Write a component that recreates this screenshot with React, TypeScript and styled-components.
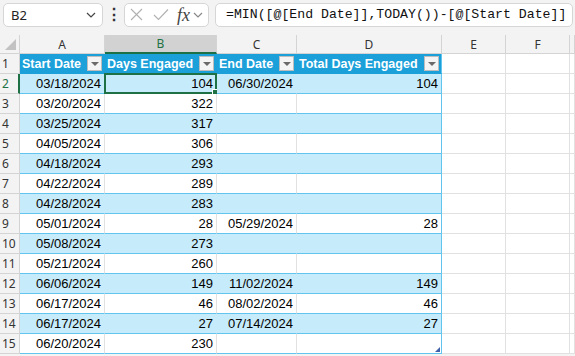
import React from 'react'
import styled, { createGlobalStyle } from 'styled-components'

const colors = {
  chrome: '#f3f3f3',
  gridLine: '#e1e1e1',
  headerLine: '#d4d4d4',
  tableHead: '#1ba0da',
  band: '#c6ebfa',
  tableLine: '#62c5f0',
  green: '#1e7145',
  text: '#000',
  muted: '#444',
}

type Row = { n: number; start: string; days: string; end?: string; total?: string }

const rows: Row[] = [
  { n: 2, start: '03/18/2024', days: '104', end: '06/30/2024', total: '104' },
  { n: 3, start: '03/20/2024', days: '322' },
  { n: 4, start: '03/25/2024', days: '317' },
  { n: 5, start: '04/05/2024', days: '306' },
  { n: 6, start: '04/18/2024', days: '293' },
  { n: 7, start: '04/22/2024', days: '289' },
  { n: 8, start: '04/28/2024', days: '283' },
  { n: 9, start: '05/01/2024', days: '28', end: '05/29/2024', total: '28' },
  { n: 10, start: '05/08/2024', days: '273' },
  { n: 11, start: '05/21/2024', days: '260' },
  { n: 12, start: '06/06/2024', days: '149', end: '11/02/2024', total: '149' },
  { n: 13, start: '06/17/2024', days: '46', end: '08/02/2024', total: '46' },
  { n: 14, start: '06/17/2024', days: '27', end: '07/14/2024', total: '27' },
  { n: 15, start: '06/20/2024', days: '230' },
]

const GlobalStyle = createGlobalStyle`
  html, body { margin: 0; padding: 0; background: ${colors.chrome}; }
  body { font-family: "Liberation Sans", Arial, sans-serif; }
`

const Page = styled.div`
  width: 575px;
  height: 356px;
  overflow: hidden;
  background: ${colors.chrome};
`

const FormulaBar = styled.div`
  display: flex;
  align-items: center;
  height: 35px;
  padding: 0 0 6px 3px;
  box-sizing: border-box;
`

const Field = styled.div`
  display: flex;
  align-items: center;
  height: 24px;
  box-sizing: border-box;
  background: #fff;
  border: 1px solid #d6d6d6;
  border-radius: 5px;
`

const NameBox = styled(Field)`
  width: 100px;
  padding: 0 6px 0 7px;
  justify-content: space-between;
  font-family: "Noto Sans", "Open Sans", sans-serif;
  font-size: 13px;
  color: #222;
`

const Dots = styled.div`
  width: 21px;
  text-align: center;
  font-size: 16px;
  font-weight: bold;
  color: #333;
  line-height: 1;
`

const FnBox = styled(Field)`
  width: 85px;
  padding: 0 0 0 5px;
`

const IconSlot = styled.span<{ $gap: number }>`
  display: flex;
  align-items: center;
  margin-right: ${(p) => p.$gap}px;
`

const Fx = styled.span`
  font-family: "Liberation Serif", "DejaVu Serif", serif;
  font-style: italic;
  font-size: 18px;
  color: #444;
  margin-right: 3px;
  line-height: 1;
`

const FormulaInput = styled(Field)`
  margin-left: 6px;
  flex: 1;
  margin-right: 2px;
  padding-left: 10px;
  font-family: "Liberation Mono", "DejaVu Sans Mono", monospace;
  font-size: 13.2px;
  color: #111;
  white-space: nowrap;
  overflow: hidden;
`

const Grid = styled.div`
  display: grid;
  grid-template-columns: 20px 85px 112px 80px 145px 64px 64px 1fr;
  grid-auto-rows: 20px;
  grid-template-rows: 19px;
  background: #fff;
`

const ColHead = styled.div<{ $active?: boolean }>`
  display: flex;
  align-items: center;
  justify-content: center;
  box-sizing: border-box;
  font-family: "Noto Sans", "Open Sans", sans-serif;
  font-size: 12px;
  color: ${(p) => (p.$active ? colors.green : '#333')};
  background: ${(p) => (p.$active ? '#d2d2d2' : colors.chrome)};
  border-right: 1px solid ${colors.headerLine};
  border-bottom: ${(p) => (p.$active ? `2px solid ${colors.green}` : `1px solid ${colors.headerLine}`)};
`

const Corner = styled(ColHead)`
  position: relative;
  &::after {
    content: '';
    position: absolute;
    right: 3px;
    bottom: 3px;
    border-style: solid;
    border-width: 0 0 11px 11px;
    border-color: transparent transparent #c2c2c2 transparent;
  }
`

const RowHead = styled.div<{ $active?: boolean }>`
  display: flex;
  align-items: center;
  padding-left: 2px;
  box-sizing: border-box;
  font-family: "Noto Sans", "Open Sans", sans-serif;
  font-size: 12px;
  color: ${(p) => (p.$active ? colors.green : '#333')};
  background: ${colors.chrome};
  border-bottom: 1px solid ${colors.headerLine};
  border-right: ${(p) => (p.$active ? `2px solid ${colors.green}` : `1px solid ${colors.headerLine}`)};
`

type Tone = 'head' | 'band' | 'plain' | 'empty'

const Cell = styled.div<{ $tone: Tone; $edge?: boolean }>`
  position: relative;
  display: flex;
  align-items: center;
  justify-content: flex-end;
  padding-right: 3px;
  box-sizing: border-box;
  font-size: 13px;
  color: ${colors.text};
  white-space: nowrap;
  background: ${(p) =>
    p.$tone === 'head' ? colors.tableHead : p.$tone === 'band' ? colors.band : '#fff'};
  border-bottom: 1px solid
    ${(p) => (p.$tone === 'empty' ? colors.gridLine : p.$tone === 'head' ? colors.tableHead : colors.tableLine)};
  border-right: 1px solid
    ${(p) =>
      p.$edge
        ? colors.tableLine
        : p.$tone === 'head'
        ? colors.tableHead
        : p.$tone === 'band'
        ? colors.band
        : colors.gridLine};
`

const HeadCell = styled(Cell)`
  justify-content: space-between;
  padding: 0 2px 0 2px;
  font-weight: bold;
  font-size: 12.5px;
  color: #fff;
`

const FilterButton = styled.div`
  width: 15px;
  height: 15px;
  box-sizing: border-box;
  background: #f4f4f4;
  border: 1px solid #bdbdbd;
  display: flex;
  align-items: center;
  justify-content: center;
  &::after {
    content: '';
    border-style: solid;
    border-width: 4px 4px 0 4px;
    border-color: #6a6a6a transparent transparent transparent;
  }
`

const Selection = styled.div`
  position: absolute;
  inset: -1px -1px -1px -1px;
  border: 2px solid ${colors.green};
  pointer-events: none;
  &::after {
    content: '';
    position: absolute;
    right: -4px;
    bottom: -4px;
    width: 5px;
    height: 5px;
    background: ${colors.green};
    border: 1px solid #fff;
  }
`

const ResizeMark = styled.div`
  position: absolute;
  right: 1px;
  bottom: 1px;
  border-style: solid;
  border-width: 0 0 5px 5px;
  border-color: transparent transparent #3f5fa8 transparent;
`

const XIcon = () => (
  <svg width="13" height="13" viewBox="0 0 13 13">
    <path d="M1 1 L12 12 M12 1 L1 12" stroke="#b0b0b0" strokeWidth="1.1" fill="none" />
  </svg>
)

const CheckIcon = () => (
  <svg width="16" height="13" viewBox="0 0 16 13">
    <path d="M1 7 L5.5 11.5 L15 1.5" stroke="#b0b0b0" strokeWidth="1.1" fill="none" />
  </svg>
)

const Chevron = ({ color = '#555' }: { color?: string }) => (
  <svg width="10" height="6" viewBox="0 0 10 6">
    <path d="M1 1 L5 5 L9 1" stroke={color} strokeWidth="1.2" fill="none" />
  </svg>
)

const letters = ['A', 'B', 'C', 'D', 'E', 'F', '']
const headers = ['Start Date', 'Days Engaged', 'End Date', 'Total Days Engaged']

function App() {
  return (
    <Page>
      <GlobalStyle />
      <FormulaBar>
        <NameBox>
          <span>B2</span>
          <Chevron color="#444" />
        </NameBox>
        <Dots>⋮</Dots>
        <FnBox>
          <IconSlot $gap={10}>
            <XIcon />
          </IconSlot>
          <IconSlot $gap={8}>
            <CheckIcon />
          </IconSlot>
          <Fx>fx</Fx>
          <Chevron color="#888" />
        </FnBox>
        <FormulaInput>=MIN([@[End Date]],TODAY())-[@[Start Date]]</FormulaInput>
      </FormulaBar>
      <Grid>
        <Corner />
        {letters.map((l) => (
          <ColHead key={l || 'g'} $active={l === 'B'}>
            {l}
          </ColHead>
        ))}

        <RowHead>1</RowHead>
        {headers.map((h, i) => (
          <HeadCell key={h} $tone="head" $edge={i === 3}>
            <span>{h}</span>
            <FilterButton />
          </HeadCell>
        ))}
        <Cell $tone="empty" />
        <Cell $tone="empty" />
        <Cell $tone="empty" />

        {rows.map((r) => {
          const tone: Tone = r.n % 2 === 0 ? 'band' : 'plain'
          return (
            <React.Fragment key={r.n}>
              <RowHead $active={r.n === 2}>{r.n}</RowHead>
              <Cell $tone={tone}>{r.start}</Cell>
              <Cell $tone={tone}>
                {r.days}
                {r.n === 2 && <Selection />}
              </Cell>
              <Cell $tone={tone}>{r.end}</Cell>
              <Cell $tone={tone} $edge>
                {r.total}
                {r.n === 15 && <ResizeMark />}
              </Cell>
              <Cell $tone="empty" />
              <Cell $tone="empty" />
              <Cell $tone="empty" />
            </React.Fragment>
          )
        })}
      </Grid>
    </Page>
  )
}

export default App
